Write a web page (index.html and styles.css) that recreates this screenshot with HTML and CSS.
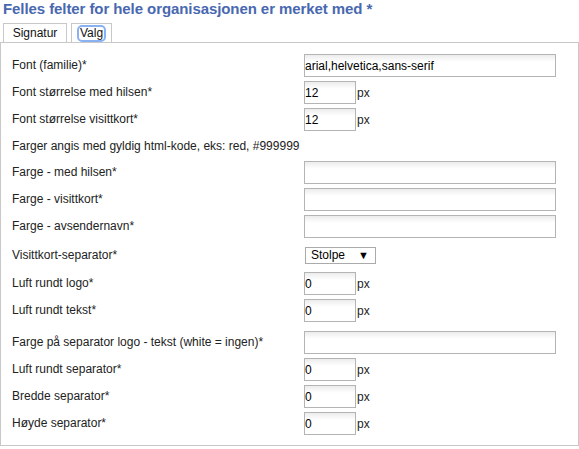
FILE: index.html
```html
<!DOCTYPE html>
<html lang="no">
<head>
    <meta charset="UTF-8">
    <title>Signatur - Valg</title>
    <link rel="stylesheet" href="styles.css">
</head>
<body>
    <h1 class="title">Felles felter for hele organisasjonen er merket med *</h1>

    <div class="tabs">
        <div class="tab tab-signatur">Signatur</div>
        <div class="tab tab-valg"><span class="focus">Valg</span></div>
    </div>

    <div class="panel">
        <div class="form">
            <label>Font (familie)*</label>
            <div class="field"><input class="wide" type="text" value="arial,helvetica,sans-serif"></div>

            <label>Font størrelse med hilsen*</label>
            <div class="field"><input class="small" type="text" value="12"><span class="unit">px</span></div>

            <label>Font størrelse visittkort*</label>
            <div class="field"><input class="small" type="text" value="12"><span class="unit">px</span></div>

            <div class="note">Farger angis med gyldig html-kode, eks: red, #999999</div>

            <label>Farge - med hilsen*</label>
            <div class="field"><input class="wide" type="text"></div>

            <label>Farge - visittkort*</label>
            <div class="field"><input class="wide" type="text"></div>

            <label>Farge - avsendernavn*</label>
            <div class="field"><input class="wide" type="text"></div>

            <label class="tall">Visittkort-separator*</label>
            <div class="field tall"><div class="select"><span>Stolpe</span><span class="arrow">▼</span></div></div>

            <label>Luft rundt logo*</label>
            <div class="field"><input class="small" type="text" value="0"><span class="unit">px</span></div>

            <label>Luft rundt tekst*</label>
            <div class="field"><input class="small" type="text" value="0"><span class="unit">px</span></div>

            <label class="spaced">Farge på separator logo - tekst (white = ingen)*</label>
            <div class="field spaced"><input class="wide" type="text"></div>

            <label>Luft rundt separator*</label>
            <div class="field"><input class="small" type="text" value="0"><span class="unit">px</span></div>

            <label>Bredde separator*</label>
            <div class="field"><input class="small" type="text" value="0"><span class="unit">px</span></div>

            <label>Høyde separator*</label>
            <div class="field"><input class="small" type="text" value="0"><span class="unit">px</span></div>
        </div>
    </div>
</body>
</html>
```

FILE: styles.css
```css
body {
    margin: 0;
    font-family: "Liberation Sans", Arial, sans-serif;
    font-size: 12px;
    color: #222;
    background: #fff;
}
.title {
    margin: 0;
    padding: 0 3px;
    font-size: 15px;
    line-height: 18px;
    font-weight: bold;
    letter-spacing: -0.08px;
    color: #4868b0;
}
.tabs {
    display: flex;
    gap: 4px;
    margin-top: 5px;
    padding-left: 3px;
}
.tab {
    height: 18px;
    border: 1px solid #c8c8c8;
    border-bottom: none;
    display: flex;
    align-items: center;
    justify-content: center;
    color: #111;
    font-size: 12px;
}
.tab-signatur {
    width: 62px;
}
.tab-valg {
    width: 39px;
}
.focus {
    padding: 0 1px;
    line-height: 13px;
    border-radius: 3px;
    outline: 2px solid #8ab2f2;
}
.panel {
    border: 1px solid #c8c8c8;
    width: 579px;
    padding: 11px 0 10px 11px;
    box-sizing: border-box;
}
.form {
    display: grid;
    grid-template-columns: 292px auto;
    row-gap: 4px;
    align-items: center;
}
.form label {
    height: 23px;
    line-height: 23px;
}
.field {
    display: flex;
    align-items: center;
    height: 23px;
}
.note {
    grid-column: 1 / 3;
    height: 22px;
    line-height: 22px;
}
.tall {
    height: 26px;
    line-height: 26px;
}
.spaced {
    margin-top: 5px;
}
input {
    box-sizing: border-box;
    height: 23px;
    margin: 0;
    padding: 0;
    border: 1px solid #b4b4b4;
    background: linear-gradient(#ececec, #fff 7px);
    font-family: "Liberation Sans", Arial, sans-serif;
    font-size: 12px;
    color: #000;
}
input.wide {
    width: 252px;
}
input.small {
    width: 52px;
}
.unit {
    margin-left: 1px;
}
.select {
    box-sizing: border-box;
    width: 71px;
    height: 17px;
    margin-left: 1px;
    border: 1px solid #aaa;
    display: flex;
    align-items: center;
    justify-content: space-between;
    padding: 0 6px 0 5px;
    color: #000;
}
.arrow {
    font-size: 11px;
}
```
